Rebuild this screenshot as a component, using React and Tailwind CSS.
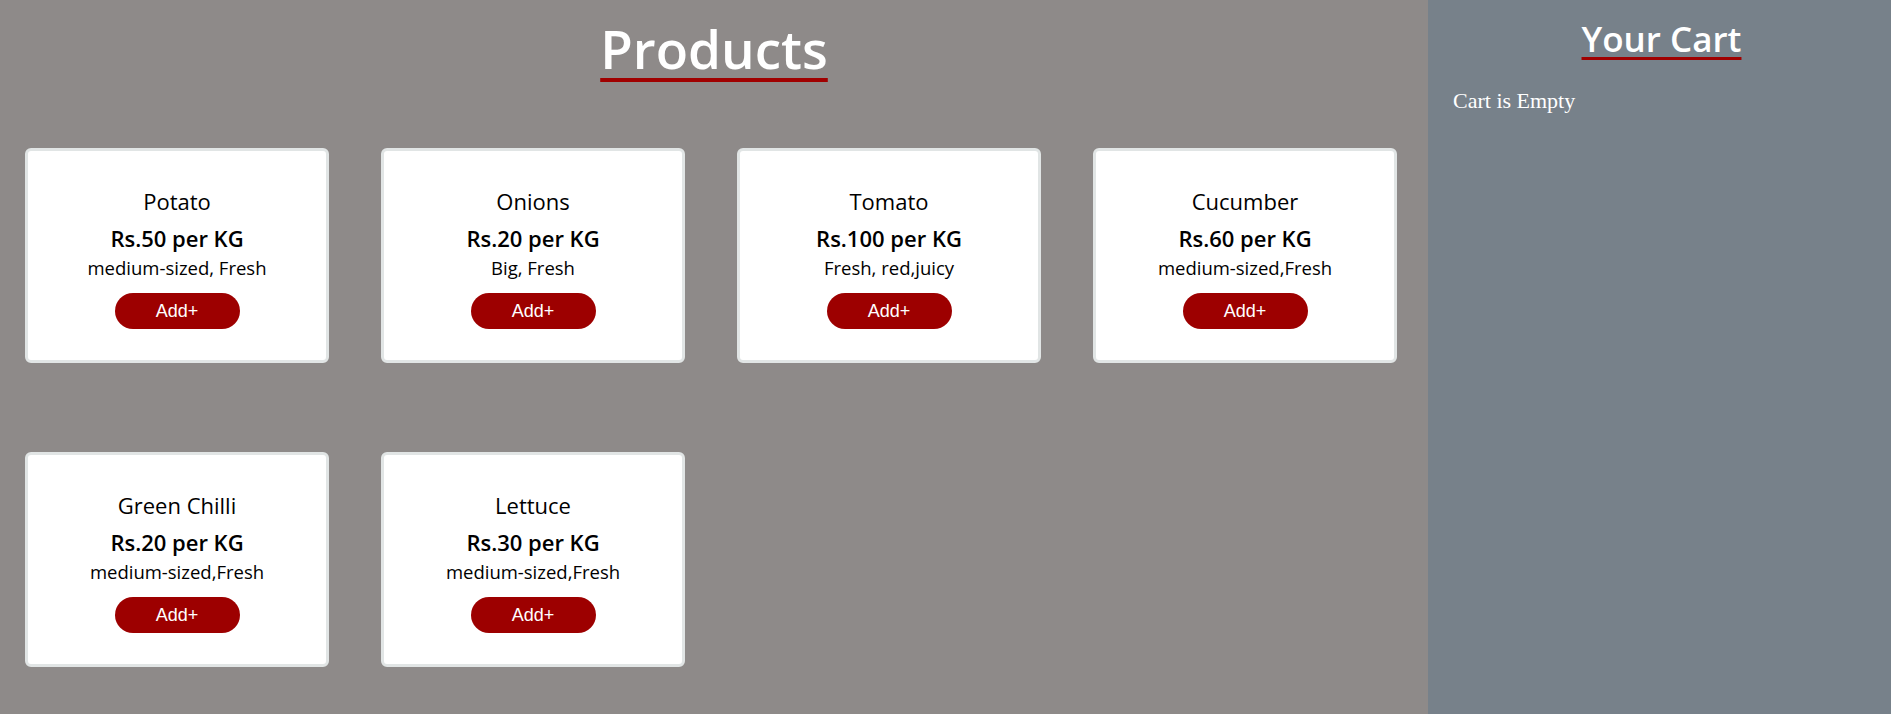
import React from "react";

const products = [
  { name: "Potato", price: "Rs.50 per KG", desc: "medium-sized, Fresh" },
  { name: "Onions", price: "Rs.20 per KG", desc: "Big, Fresh" },
  { name: "Tomato", price: "Rs.100 per KG", desc: "Fresh, red,juicy" },
  { name: "Cucumber", price: "Rs.60 per KG", desc: "medium-sized,Fresh" },
  { name: "Green Chilli", price: "Rs.20 per KG", desc: "medium-sized,Fresh" },
  { name: "Lettuce", price: "Rs.30 per KG", desc: "medium-sized,Fresh" },
];

function Card({ p }) {
  return (
    <div className="h-[215px] bg-white border-[3px] border-[#e1e5e5] rounded-[6px] flex flex-col items-center pt-[36px] text-black font-['Open_Sans',sans-serif]">
      <div className="text-[22px] font-medium leading-[28px]">{p.name}</div>
      <div className="text-[22px] font-semibold leading-[30px] mt-[8px]">{p.price}</div>
      <div className="text-[18.5px] leading-[26px] mt-[2px]">{p.desc}</div>
      <button className="mt-[12px] w-[125px] h-[36px] rounded-full bg-[#9d0000] text-white text-[18px] font-['Liberation_Sans',sans-serif]">
        Add+
      </button>
    </div>
  );
}

export default function App() {
  return (
    <div className="flex w-full h-[714px] overflow-hidden">
      <div className="w-[1428px] shrink-0 bg-[#8e8a89] flex flex-col">
        <div className="flex justify-center pt-[17px]">
          <h1 className="text-[53px] font-semibold leading-[64px] text-white font-['Open_Sans',sans-serif] underline decoration-[#a00000] decoration-[4px] underline-offset-[9px]">
            Products
          </h1>
        </div>
        <div className="grid grid-cols-[repeat(4,304px)] gap-x-[52px] gap-y-[89px] pl-[25px] mt-[67px]">
          {products.map((p) => (
            <Card key={p.name} p={p} />
          ))}
        </div>
      </div>
      <div className="flex-1 bg-[#77818a] flex flex-col">
        <div className="flex justify-center pt-[17px] pl-[4px]">
          <h2 className="text-[35px] font-semibold leading-[44px] text-white font-['Open_Sans',sans-serif] underline decoration-[#a00000] decoration-[3px] underline-offset-[5px]">
            Your Cart
          </h2>
        </div>
        <p className="pl-[25px] mt-[23px] text-[22px] text-white font-['Liberation_Serif',serif]">
          Cart is Empty
        </p>
      </div>
    </div>
  );
}
